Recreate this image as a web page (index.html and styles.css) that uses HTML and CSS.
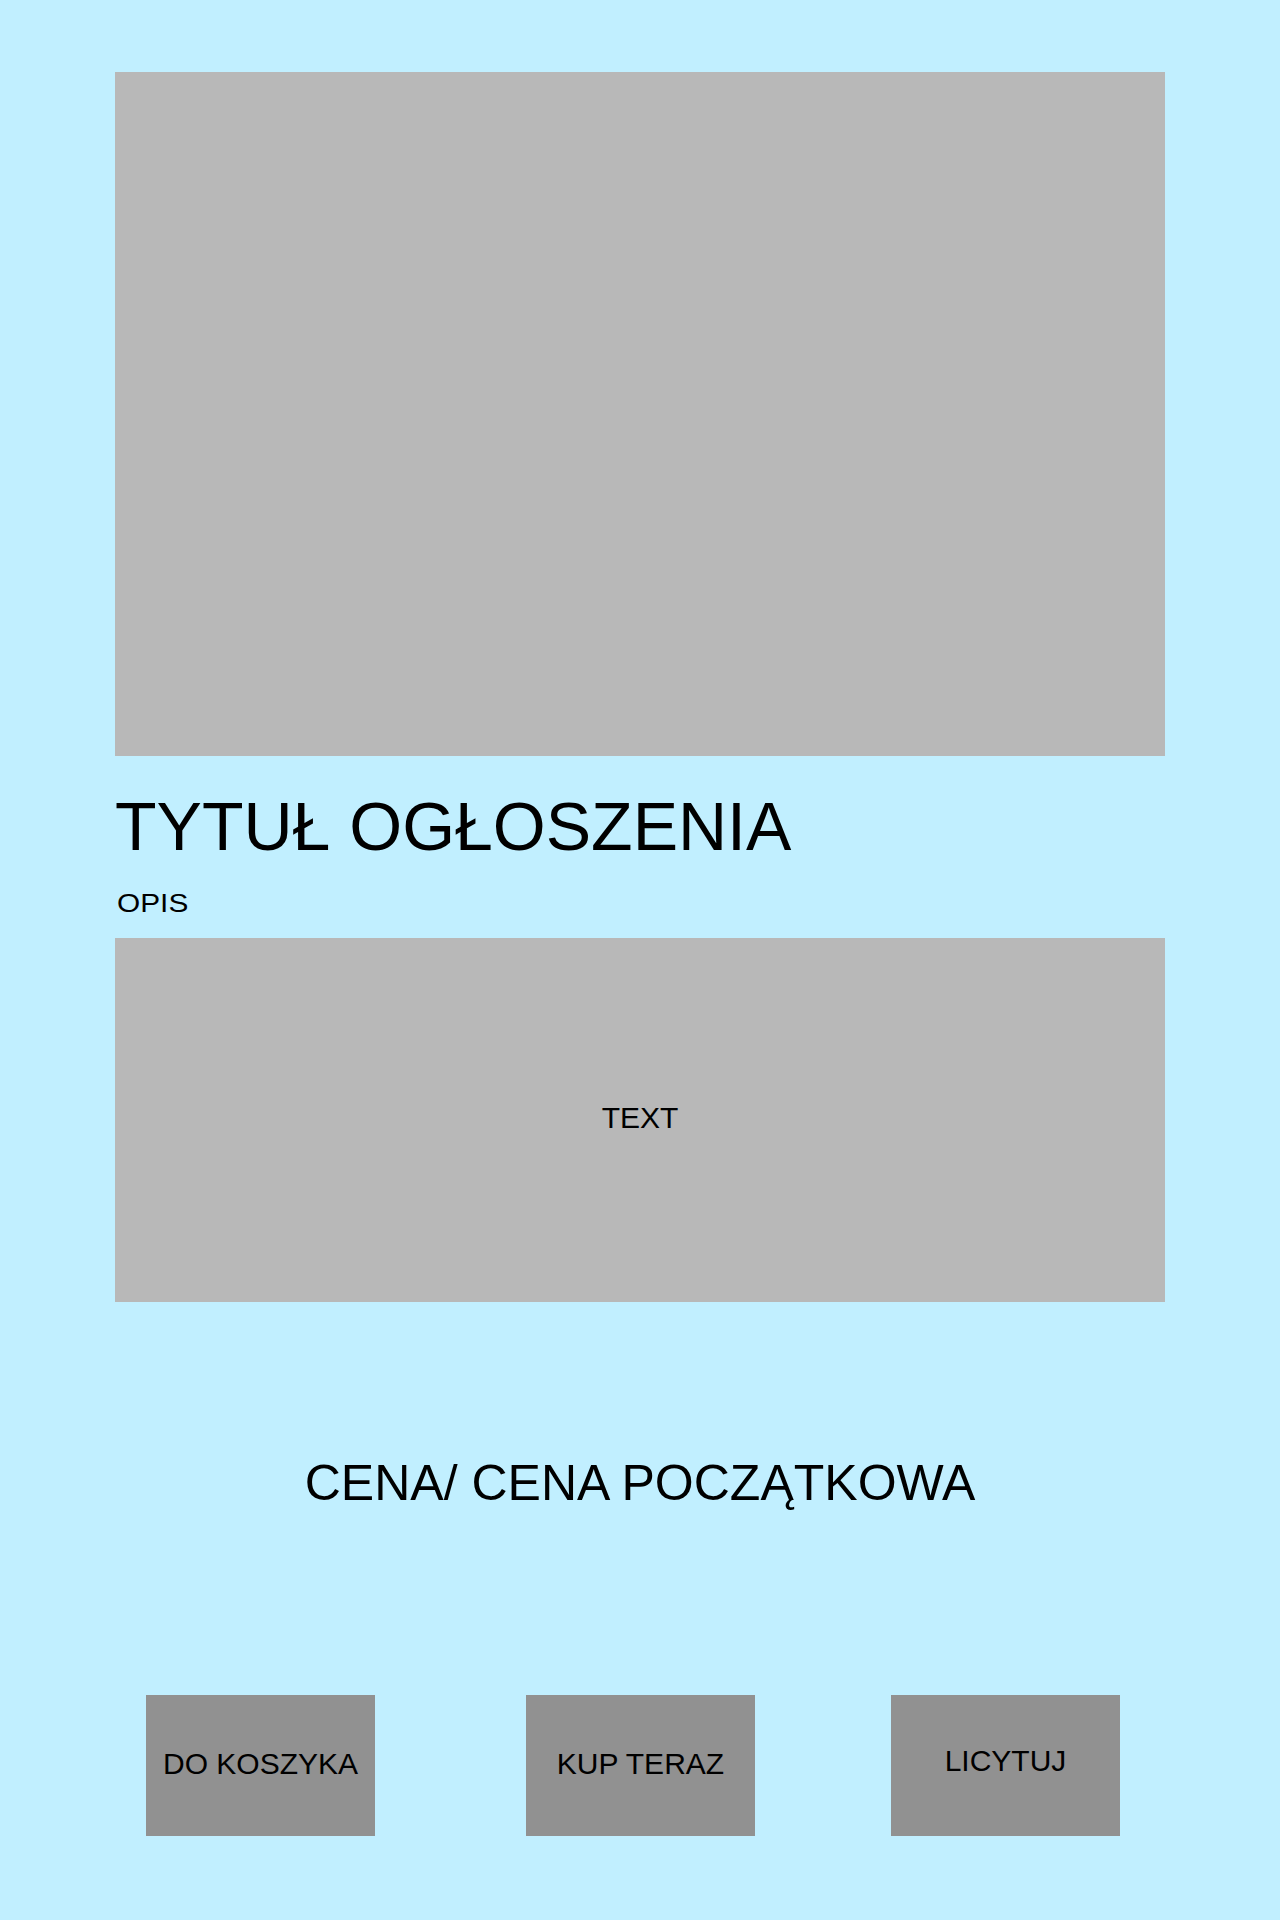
FILE: index.html
```html
<!DOCTYPE html>
<html lang="pl">
<head>
<meta charset="utf-8">
<title>Ogłoszenie</title>
<link rel="stylesheet" href="styles.css">
</head>
<body>
<main class="page">
  <div class="photo"></div>
  <h1 class="title">TYTUŁ OGŁOSZENIA</h1>
  <div class="desc-label"><span class="stretch">OPIS</span></div>
  <div class="desc-box"><span class="desc-text">TEXT</span></div>
  <div class="price">CENA/ CENA POCZĄTKOWA</div>
  <div class="actions">
    <div class="btn btn-cart">DO KOSZYKA</div>
    <div class="btn btn-buy">KUP TERAZ</div>
    <div class="btn btn-bid">LICYTUJ</div>
  </div>
</main>
</body>
</html>
```
FILE: styles.css
```css
html, body {
  margin: 0;
  padding: 0;
}
body {
  background: #c1efff;
  font-family: "Liberation Sans", Arial, sans-serif;
  color: #000;
  width: 1280px;
  min-height: 1920px;
}
.page {
  padding: 72px 115px 0;
}
.photo {
  height: 684px;
  background: #b8b8b8;
}
.title {
  margin: 31px 0 0;
  font-size: 68px;
  line-height: 78px;
  font-weight: 400;
}
.desc-label {
  margin-top: 23px;
  padding-left: 2px;
  font-size: 25.5px;
  line-height: 30px;
}
.stretch {
  display: inline-block;
  transform: scaleX(1.17);
  transform-origin: left center;
}
.desc-box {
  margin-top: 20px;
  height: 364px;
  background: #b8b8b8;
  display: flex;
  align-items: center;
  justify-content: center;
  font-size: 30px;
  line-height: 34px;
}
.desc-text {
  padding-bottom: 4px;
}
.price {
  margin-top: 152px;
  text-align: center;
  font-size: 50px;
  line-height: 58px;
}
.actions {
  margin-top: 183px;
  display: flex;
}
.btn {
  width: 229px;
  height: 141px;
  background: #919191;
  display: flex;
  align-items: center;
  justify-content: center;
  font-size: 30px;
  line-height: 34px;
  box-sizing: border-box;
  padding-bottom: 4px;
}
.btn-cart {
  margin-left: 31px;
}
.btn-buy {
  margin-left: 151px;
}
.btn-bid {
  margin-left: 136px;
  padding-bottom: 10px;
}
```
